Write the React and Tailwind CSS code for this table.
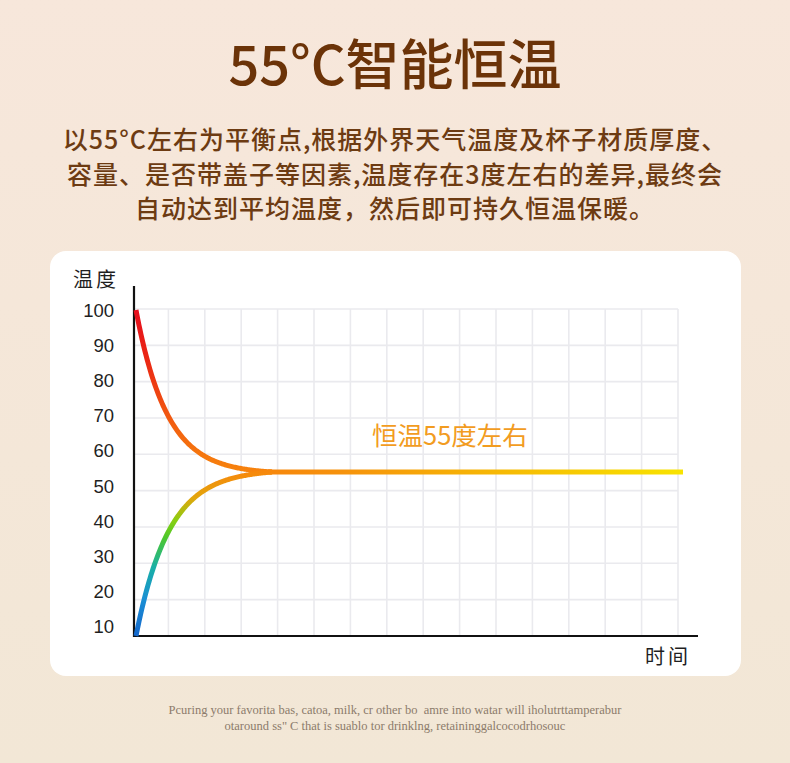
import React from "react";

function buildCurve(x0, x1, yEnd, amp, tau, sign) {
  const pts = [];
  const eT = Math.exp(-(x1 - x0) / tau);
  for (let x = x0; x <= x1; x += 1) {
    const e = (Math.exp(-(x - x0) / tau) - eT) / (1 - eT);
    const y = yEnd + sign * amp * e;
    pts.push(`${x.toFixed(1)},${y.toFixed(2)}`);
  }
  return "M" + pts.join(" L");
}

function Chart() {
  const gx0 = 84;
  const gx1 = 628;
  const gy0 = 58;
  const gy1 = 385;
  const vLines = [];
  for (let k = 1; k <= 15; k++) vLines.push(82 + 36.4 * k);
  const hLines = [];
  for (let j = 0; j < 9; j++) hLines.push(gy0 + 36.33 * j);
  const labels = [100, 90, 80, 70, 60, 50, 40, 30, 20, 10];
  const topPath = buildCurve(86, 222, 221, 162, 31, -1);
  const botPath = buildCurve(86, 222, 221, 164, 33, 1);
  const cjk = "'Noto Sans CJK SC', 'Noto Sans', sans-serif";
  const latin = "'Liberation Sans', Arial, sans-serif";
  return (
    <svg width="691" height="425" viewBox="0 0 691 425" className="block">
      <defs>
        <linearGradient id="gTop" gradientUnits="userSpaceOnUse" x1="0" y1="59" x2="0" y2="221">
          <stop offset="0" stopColor="#e60f1e" />
          <stop offset="0.3" stopColor="#ea2614" />
          <stop offset="0.7" stopColor="#f25e10" />
          <stop offset="1" stopColor="#f7840d" />
        </linearGradient>
        <linearGradient id="gBot" gradientUnits="userSpaceOnUse" x1="0" y1="385" x2="0" y2="221">
          <stop offset="0" stopColor="#1467cc" />
          <stop offset="0.22" stopColor="#1a8ed4" />
          <stop offset="0.42" stopColor="#19b0a6" />
          <stop offset="0.6" stopColor="#4cc72c" />
          <stop offset="0.7" stopColor="#86cf12" />
          <stop offset="0.84" stopColor="#e2a60c" />
          <stop offset="1" stopColor="#f7880c" />
        </linearGradient>
        <linearGradient id="gFlat" gradientUnits="userSpaceOnUse" x1="205" y1="0" x2="633" y2="0">
          <stop offset="0" stopColor="#f7850c" />
          <stop offset="0.2" stopColor="#f6920c" />
          <stop offset="0.6" stopColor="#f6bc04" />
          <stop offset="1" stopColor="#f8e300" />
        </linearGradient>
      </defs>
      {vLines.map((x, i) => (
        <line key={"v" + i} x1={x} y1={gy0} x2={x} y2={gy1} stroke="#eaeaee" strokeWidth="1.6" />
      ))}
      {hLines.map((y, i) => (
        <line key={"h" + i} x1={gx0} y1={y} x2={gx1} y2={y} stroke="#eaeaee" strokeWidth="1.6" />
      ))}
      <line x1="84" y1="35" x2="84" y2="386" stroke="#111" strokeWidth="2.2" />
      <line x1="83" y1="385" x2="648" y2="385" stroke="#111" strokeWidth="2.2" />
      <line x1="218" y1="221" x2="633" y2="221" stroke="url(#gFlat)" strokeWidth="5" />
      <path d={topPath} fill="none" stroke="url(#gTop)" strokeWidth="5" strokeLinecap="butt" />
      <path d={botPath} fill="none" stroke="url(#gBot)" strokeWidth="5" strokeLinecap="butt" />
      {labels.map((v, i) => (
        <text
          key={v}
          x="64"
          y={65.7 + 35.18 * i}
          textAnchor="end"
          fontFamily={latin}
          fontSize="18.5"
          fill="#1f1f1f"
        >
          {v}
        </text>
      ))}
      <text x="23" y="36" fontFamily={cjk} fontSize="20" fill="#1f1f1f" letterSpacing="3">
        温度
      </text>
      <text x="595" y="413" fontFamily={cjk} fontSize="20" fill="#1f1f1f" letterSpacing="3">
        时间
      </text>
      <text x="322" y="194" fontFamily={cjk} fontSize="25.5" fill="#f29c1f">
        恒温55度左右
      </text>
    </svg>
  );
}

export default function App() {
  return (
    <div className="w-[790px] h-[763px] overflow-hidden flex flex-col items-center bg-gradient-to-b from-[#f7e7db] to-[#f2e7d6] font-['Noto_Sans_CJK_SC','Noto_Sans',sans-serif]">
      <h1 className="mt-[35px] text-[54px] leading-[54px] font-medium text-[#6b3308] whitespace-nowrap">
        55°C智能恒温
      </h1>
      <p className="mt-[32px] text-[25px] leading-[34.5px] tracking-[1px] font-medium text-[#6d3b12] text-center whitespace-nowrap">
        <span className="block">以55°C左右为平衡点,根据外界天气温度及杯子材质厚度、</span>
        <span className="block">容量、是否带盖子等因素,温度存在3度左右的差异,最终会</span>
        <span className="block">自动达到平均温度，然后即可持久恒温保暖。</span>
      </p>
      <div className="mt-[26.5px] w-[691px] h-[425px] rounded-[16px] bg-white overflow-hidden">
        <Chart />
      </div>
      <div className="mt-[26px] text-[12.5px] leading-[16px] text-[#8c7b6b] text-center font-['Liberation_Serif','Times_New_Roman',serif] whitespace-nowrap">
        <span className="block">Pcuring your favorita bas, catoa, milk, cr other bo&nbsp; amre into watar will iholutrttamperabur</span>
        <span className="block">otaround ss" C that is suablo tor drinklng, retaininggalcocodrhosouc</span>
      </div>
    </div>
  );
}
